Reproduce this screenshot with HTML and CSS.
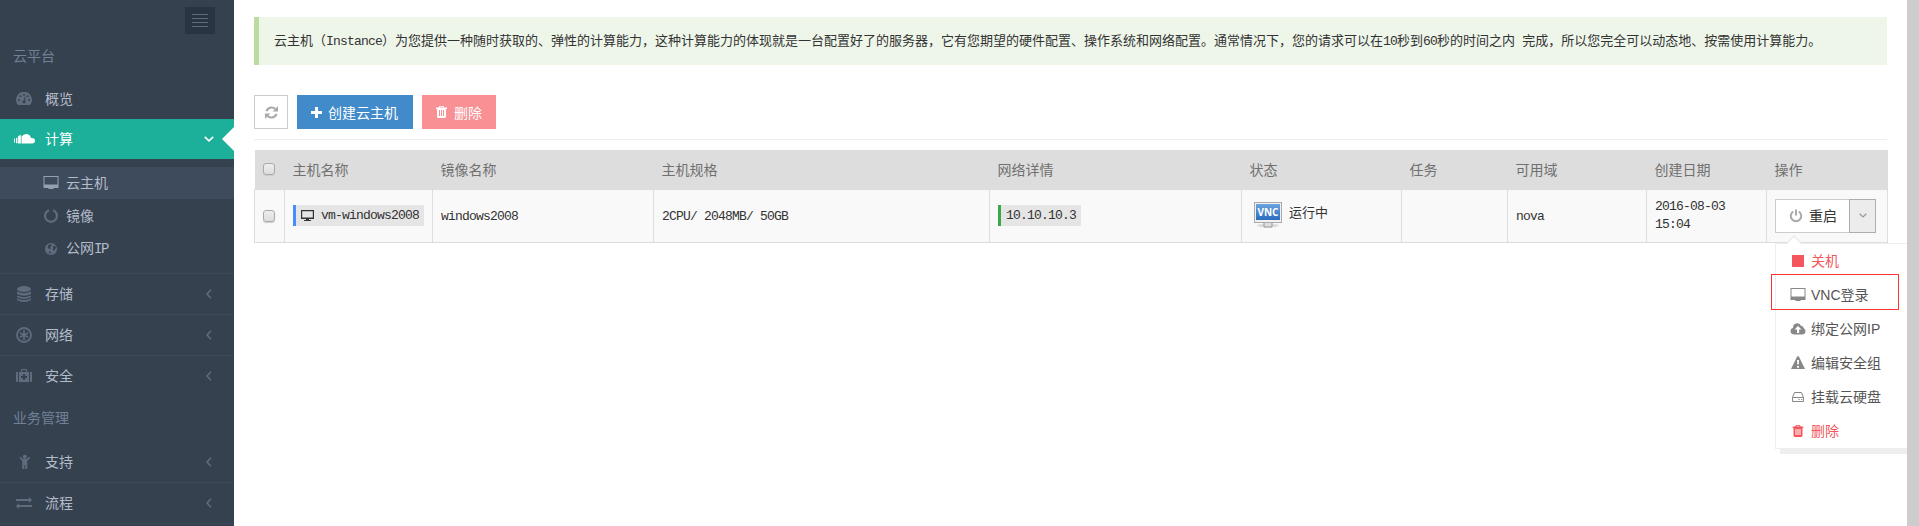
FILE: index.html
```html
<!DOCTYPE html>
<html lang="zh-CN">
<head>
<meta charset="utf-8">
<title>云主机</title>
<link rel="stylesheet" href="styles.css">
</head>
<body>
<svg width="0" height="0" class="defs">
  <symbol id="chev-left" viewBox="0 0 8 10"><path d="M6 .8 2 5l4 4.200" fill="none" stroke="currentColor" stroke-width="1.500"/></symbol>
  <symbol id="chev-down" viewBox="0 0 10 6"><path d="M.8.8 5 4.800 9.200.8" fill="none" stroke="currentColor" stroke-width="1.600"/></symbol>
  <symbol id="desktop" viewBox="0 0 16 14"><path fill="currentColor" fill-rule="evenodd" d="M.5 0h15v12h-5v1h-5v-1h-5zM1.500 1v7.500h13V1z"/></symbol>
  <symbol id="trash" viewBox="0 0 11 12"><path fill="currentColor" fill-rule="evenodd" d="M3.500 0h4l.7 1.500H11V3h-1v8l-1 1H2l-1-1V3H0V1.500h2.800zM4.200.800 4 1.500h3l-.2-.7zM3 4v6h1V4zm2 0v6h1V4zm2 0v6h1V4z"/></symbol>
</svg>
<div class="page">
  <aside class="sidebar">
    <div class="toggle-row"><button class="toggle"><i></i><i></i><i></i><i></i></button></div>
    <div class="heading first">云平台</div>
    <div class="item overview">
      <svg class="icon" viewBox="0 0 16 14"><path fill="currentColor" d="M2 13a8 8 0 1 1 12 0z"/><g fill="#364150"><circle cx="3" cy="8" r="1"/><circle cx="4.500" cy="4.200" r="1"/><circle cx="8" cy="2.700" r="1"/><circle cx="11.700" cy="4.200" r="1"/><circle cx="13.200" cy="8" r="1"/><circle cx="8" cy="9.800" r="1.600"/><path d="m8.800 4.500.9.2L8.700 10h-1z"/></g></svg>
      <span>概览</span>
    </div>
    <div class="item active">
      <svg class="icon cloud" viewBox="0 0 21 10"><path fill="currentColor" d="M7.500 9.500V2.500Q9.500 0 12 0q4 .2 5 4 4-.3 4 2.800 0 2.700-3 2.700zM2 4.200l1.400-.8v6L2 9zM4.100 2.300 6.800.8v8.700H4.100zM0 4.500h1v4H0z"/></svg>
      <span>计算</span>
      <svg class="chev down"><use href="#chev-down"/></svg>
      <b class="notch"></b>
    </div>
    <div class="submenu">
      <div class="sub current"><svg class="icon"><use href="#desktop"/></svg><span>云主机</span></div>
      <div class="sub"><svg class="icon" viewBox="0 0 16 14"><path d="M6 1.200A6 6 0 1 0 10 1.200" fill="none" stroke="currentColor" stroke-width="2.200"/></svg><span>镜像</span></div>
      <div class="sub"><svg class="icon" viewBox="0 0 16 14"><circle cx="8" cy="7" r="6" fill="currentColor"/><path fill="#364150" d="M5.500 3l2.500-1 1 1.500-2 1.500 1 1.500-1.500.5L4.500 6zM10 4.500l2-1 1 2-1 2-2 1.500 0-2zM6.500 9l1.500 1-.5 1.500-1.500-.5z"/></svg><span>公网<em class="latin">IP</em></span></div>
    </div>
    <div class="item lined">
      <svg class="icon tall" viewBox="0 0 16 16"><g fill="currentColor"><ellipse cx="8" cy="3" rx="7" ry="3"/><path d="M1 5.500q7 3.500 14 0V8q-7 3.500-14 0zM1 9.500q7 3.500 14 0V11q-7 4-14 0zM1 12.500q7 3.500 14 0v1.500q-7 4-14 0z"/></g></svg>
      <span>存储</span><svg class="chev left"><use href="#chev-left"/></svg>
    </div>
    <div class="item lined">
      <svg class="icon tall" viewBox="0 0 16 16"><circle cx="8" cy="8" r="7" fill="none" stroke="currentColor" stroke-width="1.800" /><path d="M8 3v10M4 6l8 4M12 6l-8 4" stroke="currentColor" stroke-width="1.600"/></svg>
      <span>网络</span><svg class="chev left"><use href="#chev-left"/></svg>
    </div>
    <div class="item lined">
      <svg class="icon tall" viewBox="0 0 16 16"><path fill="currentColor" fill-rule="evenodd" d="M0 4h2v10H.8L0 13.200zM14 4h2v9.200l-.8.8H14zM3 4h2V1.500L5.500 1h5l.5.500V4h2v10H3zM6 2v2h4V2zM7 6v2H5v2h2v2h2v-2h2V8H9V6z"/></svg>
      <span>安全</span><svg class="chev left"><use href="#chev-left"/></svg>
    </div>
    <div class="heading second">业务管理</div>
    <div class="item">
      <svg class="icon tall" viewBox="0 0 16 16"><g fill="currentColor"><circle cx="8.800" cy="2.800" r="2"/><path d="M4.500 2.800 7 5h3.600l2.600-2.200 1 1L11.200 7v8H9.300v-4H8.300v4H6.200V7L3.500 3.800z"/></g></svg>
      <span>支持</span><svg class="chev left"><use href="#chev-left"/></svg>
    </div>
    <div class="item lined">
      <svg class="icon tall" viewBox="0 0 16 16"><path fill="currentColor" d="M0 4h13V2l3 3-3 3V6H0zM16 10H3V8l-3 3 3 3v-2h13z"/></svg>
      <span>流程</span><svg class="chev left"><use href="#chev-left"/></svg>
    </div>
    <div class="item lined"></div>
  </aside>

  <main class="content">
    <div class="note">云主机（<em class="latin">Instance</em>）为您提供一种随时获取的、弹性的计算能力，这种计算能力的体现就是一台配置好了的服务器，它有您期望的硬件配置、操作系统和网络配置。通常情况下，您的请求可以在<em class="latin">10</em>秒到<em class="latin">60</em>秒的时间之内<em class="latin">&nbsp;</em>完成，所以您完全可以动态地、按需使用计算能力。</div>
    <div class="toolbar">
      <button class="btn refresh"><svg viewBox="0 0 12 12" width="13" height="13"><path d="M1.300 4.800A5 5 0 0 1 9.500 2.800M10.700 7.200A5 5 0 0 1 2.500 9.200" fill="none" stroke="currentColor" stroke-width="2"/><path fill="currentColor" d="M12 0v5H7zM0 12V7h5z"/></svg></button>
      <button class="btn create"><svg viewBox="0 0 11 11" width="11" height="11"><path fill="currentColor" d="M4 0h3v4h4v3H7v4H4V7H0V4h4z"/></svg><span>创建云主机</span></button>
      <button class="btn remove"><svg width="11" height="12"><use href="#trash"/></svg><span>删除</span></button>
    </div>
    <table class="grid">
      <colgroup><col class="c1"><col class="c2"><col class="c3"><col class="c4"><col class="c5"><col class="c6"><col class="c7"><col class="c8"><col class="c9"><col class="c10"></colgroup>
      <thead><tr><th><i class="box"></i></th><th>主机名称</th><th>镜像名称</th><th>主机规格</th><th>网络详情</th><th>状态</th><th>任务</th><th>可用域</th><th>创建日期</th><th>操作</th></tr></thead>
      <tbody><tr>
        <td><i class="box"></i></td>
        <td><span class="tag blue"><svg width="13" height="12" viewBox="0 0 13 12"><path fill="currentColor" fill-rule="evenodd" d="M0 0h13v9H8v1h2v1H3v-1h2V9H0zM1.200 1.200v6.300h10.600V1.200z"/></svg><em class="latin">vm-windows2008</em></span></td>
        <td><em class="latin">windows2008</em></td>
        <td><em class="latin">2CPU/ 2048MB/ 50GB</em></td>
        <td><span class="tag green"><em class="latin">10.10.10.3</em></span></td>
        <td><div class="state">
          <svg width="30" height="28" viewBox="0 0 30 28"><defs><linearGradient id="scr" x1="0" y1="0" x2="0" y2="1"><stop offset="0" stop-color="#6ba3dd"/><stop offset="1" stop-color="#2c6cc0"/></linearGradient></defs><ellipse cx="15" cy="24.500" rx="11" ry="2" fill="#ddd"/><path d="M11 21h8v5h-8z" fill="#ddd" stroke="#999"/><rect x="1.500" y="1.500" width="27" height="20" fill="#f1f1f1" stroke="#aaa"/><rect x="3" y="3" width="24" height="16" fill="url(#scr)"/><text x="15" y="15" text-anchor="middle" class="vnc">VNC</text></svg>
          <span>运行中</span></div></td>
        <td></td>
        <td><em class="latin">nova</em></td>
        <td><em class="latin date">2016-08-03<br>15:04</em></td>
        <td class="ops">
          <div class="split"><button class="restart"><svg width="14" height="14" viewBox="0 0 14 14"><path d="M4.300 2.500a5.200 5.200 0 1 0 5.400 0M7 .5v6" fill="none" stroke="currentColor" stroke-width="2"/></svg><span>重启</span></button><button class="caret"><svg width="8" height="5"><use href="#chev-down"/></svg></button></div>
          <div class="clip"><div class="menu">
            <div class="entry red"><svg viewBox="0 0 16 14"><path fill="currentColor" d="M2 1h12v12H2z"/></svg><span>关机</span></div>
            <div class="entry"><svg><use href="#desktop"/></svg><span><em class="sans">VNC</em>登录</span></div>
            <div class="entry"><svg viewBox="0 0 16 14"><path fill="currentColor" fill-rule="evenodd" d="M4 12.500Q.5 12 .5 9q0-2.500 2.500-3.300Q3 1.500 7 1.200q3.200 0 4 2.800 2.500-.3 2.700 2.300Q15.700 7 15.500 9.500q-.3 3-3.500 3zM8 4 4.600 7.600H7V11h2.200V7.600h2.300z"/></svg><span>绑定公网<em class="sans">IP</em></span></div>
            <div class="entry"><svg viewBox="0 0 16 14"><path fill="currentColor" fill-rule="evenodd" d="M8 0l1 .7L15 13H1L7 .7zM7 4l.3 4.500h1.500L9 4zM7 10v1.700h2V10z"/></svg><span>编辑安全组</span></div>
            <div class="entry"><svg viewBox="0 0 16 14"><path fill="none" stroke="currentColor" d="M2.500 7.500 4.500 2.500h7l2 5v4h-11zM2.500 7.500h11"/><path fill="currentColor" d="M8.500 9h1.200v1H8.500zM11 9h1.200v1H11z"/></svg><span>挂载云硬盘</span></div>
            <div class="entry red"><svg viewBox="-2.500 -1 16 14"><use href="#trash" width="11" height="12"/></svg><span>删除</span></div>
          </div></div>
          <div class="mark"></div>
        </td>
      </tr></tbody>
    </table>
  </main>
  <div class="scroll"></div>
</div>
</body>
</html>
```
FILE: styles.css
```css
* { box-sizing: border-box; }
body { margin: 0; background: #fff; color: #333; font: 400 13px/18px "Noto Sans CJK SC", sans-serif; }
.defs { position: absolute; }
button { font: inherit; padding: 0; margin: 0; border-radius: 0; }
em { font-style: normal; }
svg { display: block; flex: none; }
.latin { font-family: "Liberation Mono", monospace; font-size: 13px; letter-spacing: -.8px; font-weight: 400; white-space: pre; line-height: 16px; }
.page { display: flex; width: 100%; height: 526px; overflow: hidden; }

.sidebar { width: 234px; flex: none; background: #364150; color: #b4bcc8; font-size: 14px; overflow: hidden; }
.toggle-row { display: flex; justify-content: flex-end; height: 34px; padding: 7px 19px 0 0; }
.toggle { width: 30px; height: 27px; background: #293442; border: 0; padding: 7px; display: flex; flex-direction: column; gap: 3px; }
.toggle i { height: 1px; width: 16px; background: #606c7d; }
.heading { padding-left: 13px; color: #708096; line-height: 20px; }
.heading.first { margin-top: 11px; height: 34px; }
.heading.second { padding-top: 11px; height: 45px; }
.item { height: 41px; display: flex; align-items: center; padding-left: 16px; position: relative; }
.item span, .sub span { padding-bottom: 2px; }
.item.overview { height: 40px; }
.item .icon { width: 16px; height: 14px; color: #606c7d; margin-right: 13px; }
.item .icon.tall { height: 16px; }
.item.lined { border-top: 1px solid #3d4957; }
.item.active { height: 40px; background: #1caf9a; color: #fff; padding-left: 14px; }
.item .icon.cloud { width: 21px; height: 10px; color: #fff; margin-right: 10px; }
.chev { margin-left: auto; color: #606c7d; }
.chev.left { width: 8px; height: 10px; margin-right: 21px; }
.chev.down { width: 10px; height: 6px; color: #fff; margin-right: 20px; }
.notch { position: absolute; right: 0; top: 8px; border: 12px solid transparent; border-right-color: #fff; border-left: 0; }
.submenu { padding: 8px 0 7px; height: 114px; }
.sub { height: 33px; display: flex; align-items: center; padding-left: 43px; }
.sub.current { height: 32px; background: #3e4b5c; }
.sub .icon { width: 16px; height: 14px; color: #606c7d; margin-right: 7px; }
.sub.current .icon { color: #959fae; }
.sub .latin { font-size: 14px; letter-spacing: -1.4px; }

.content { flex: 1; padding: 17px 20px 0; min-width: 0; }
.note { height: 48px; background: #eef6ea; border-left: 5px solid #bbdba1; padding: 14px 0 0 15px; white-space: nowrap; }
.toolbar { display: flex; gap: 9px; margin-top: 30px; height: 45px; border-bottom: 1px solid #eee; }
.btn { height: 34px; display: flex; align-items: center; justify-content: flex-start; gap: 7px; border: 0; color: #fff; font-size: 14px; padding-left: 14px; }
.btn span { padding-bottom: 1px; }
.btn.refresh { width: 34px; background: #fff; border: 1px solid #ccc; color: #aaa; padding: 0; justify-content: center; }
.create { width: 116px; background: #428bca; }
.create span { margin-left: -1px; }
.remove { width: 74px; background: #f89094; }
.grid { margin-top: 10px; width: 1633px; table-layout: fixed; border-collapse: collapse; }
.c1 { width: 30px; } .c2 { width: 148px; } .c3 { width: 221px; } .c4 { width: 336px; } .c5 { width: 252px; }
.c6 { width: 160px; } .c7 { width: 106px; } .c8 { width: 139px; } .c9 { width: 120px; } .c10 { width: 121px; }
th { height: 39px; background: #ddd; padding: 0 8px; text-align: left; font-size: 14px; font-weight: 400; color: #707070; }
td { height: 53px; background: #f9f9f9; border: 1px solid #ddd; padding: 0 8px; }
.box { display: block; width: 12px; height: 12px; border: 1px solid #aaa; border-radius: 3px; background: linear-gradient(#eee, #ddd); box-shadow: 0 1px 1px #ccc; }
.tag { display: inline-flex; align-items: center; height: 21px; background: #e5e5e5; padding: 0 5px; vertical-align: middle; }
.tag.blue { border-left: 3px solid #4b8df8; gap: 7px; }
.tag.green { border-left: 3px solid #35aa47; }
.state { display: flex; gap: 6px; padding: 0 0 2px 3px; align-items: center; }
.state span { padding-bottom: 5px; }
.vnc { font: 700 10px "Open Sans", sans-serif; fill: #fff; }
.date { display: block; line-height: 18px; }
.ops { position: relative; }
.split { display: flex; width: 101px; height: 34px; font-size: 14px; }
.restart { width: 75px; background: #fff; border: 1px solid #ccc; border-right: 0; display: flex; align-items: center; padding-left: 13px; gap: 6px; color: #333; }
.restart span { padding-bottom: 2px; }
.restart svg { color: #aaa; }
.caret { width: 27px; background: #ececec; border: 1px solid #adadad; display: grid; place-items: center; color: #999; }
.clip { position: absolute; left: 8px; top: 45px; width: 132px; height: 220px; padding-top: 8px; overflow: hidden; }
.menu { position: relative; width: 175px; height: 206px; border: 1px solid #eee; background: #fff; box-shadow: 5px 5px #eee; font-size: 14px; color: #555; }
.menu::before { content: ""; position: absolute; left: 12px; top: -6px; width: 11px; height: 11px; background: #fff; border: solid #e5e5e5; border-width: 1px 0 0 1px; transform: rotate(45deg); }
.entry { height: 34px; display: flex; align-items: center; padding-left: 14px; gap: 5px; }
.entry span { padding-bottom: 1px; }
.sans { font-family: "Liberation Sans", sans-serif; }
.entry svg { width: 16px; height: 14px; color: #888; }
.entry.red, .entry.red svg { color: #f3565d; }
.mark { position: absolute; left: 4px; top: 84px; width: 128px; height: 36px; border: 1px solid #f33; }
.scroll { width: 12px; flex: none; background: #cdcdcd; }
```
